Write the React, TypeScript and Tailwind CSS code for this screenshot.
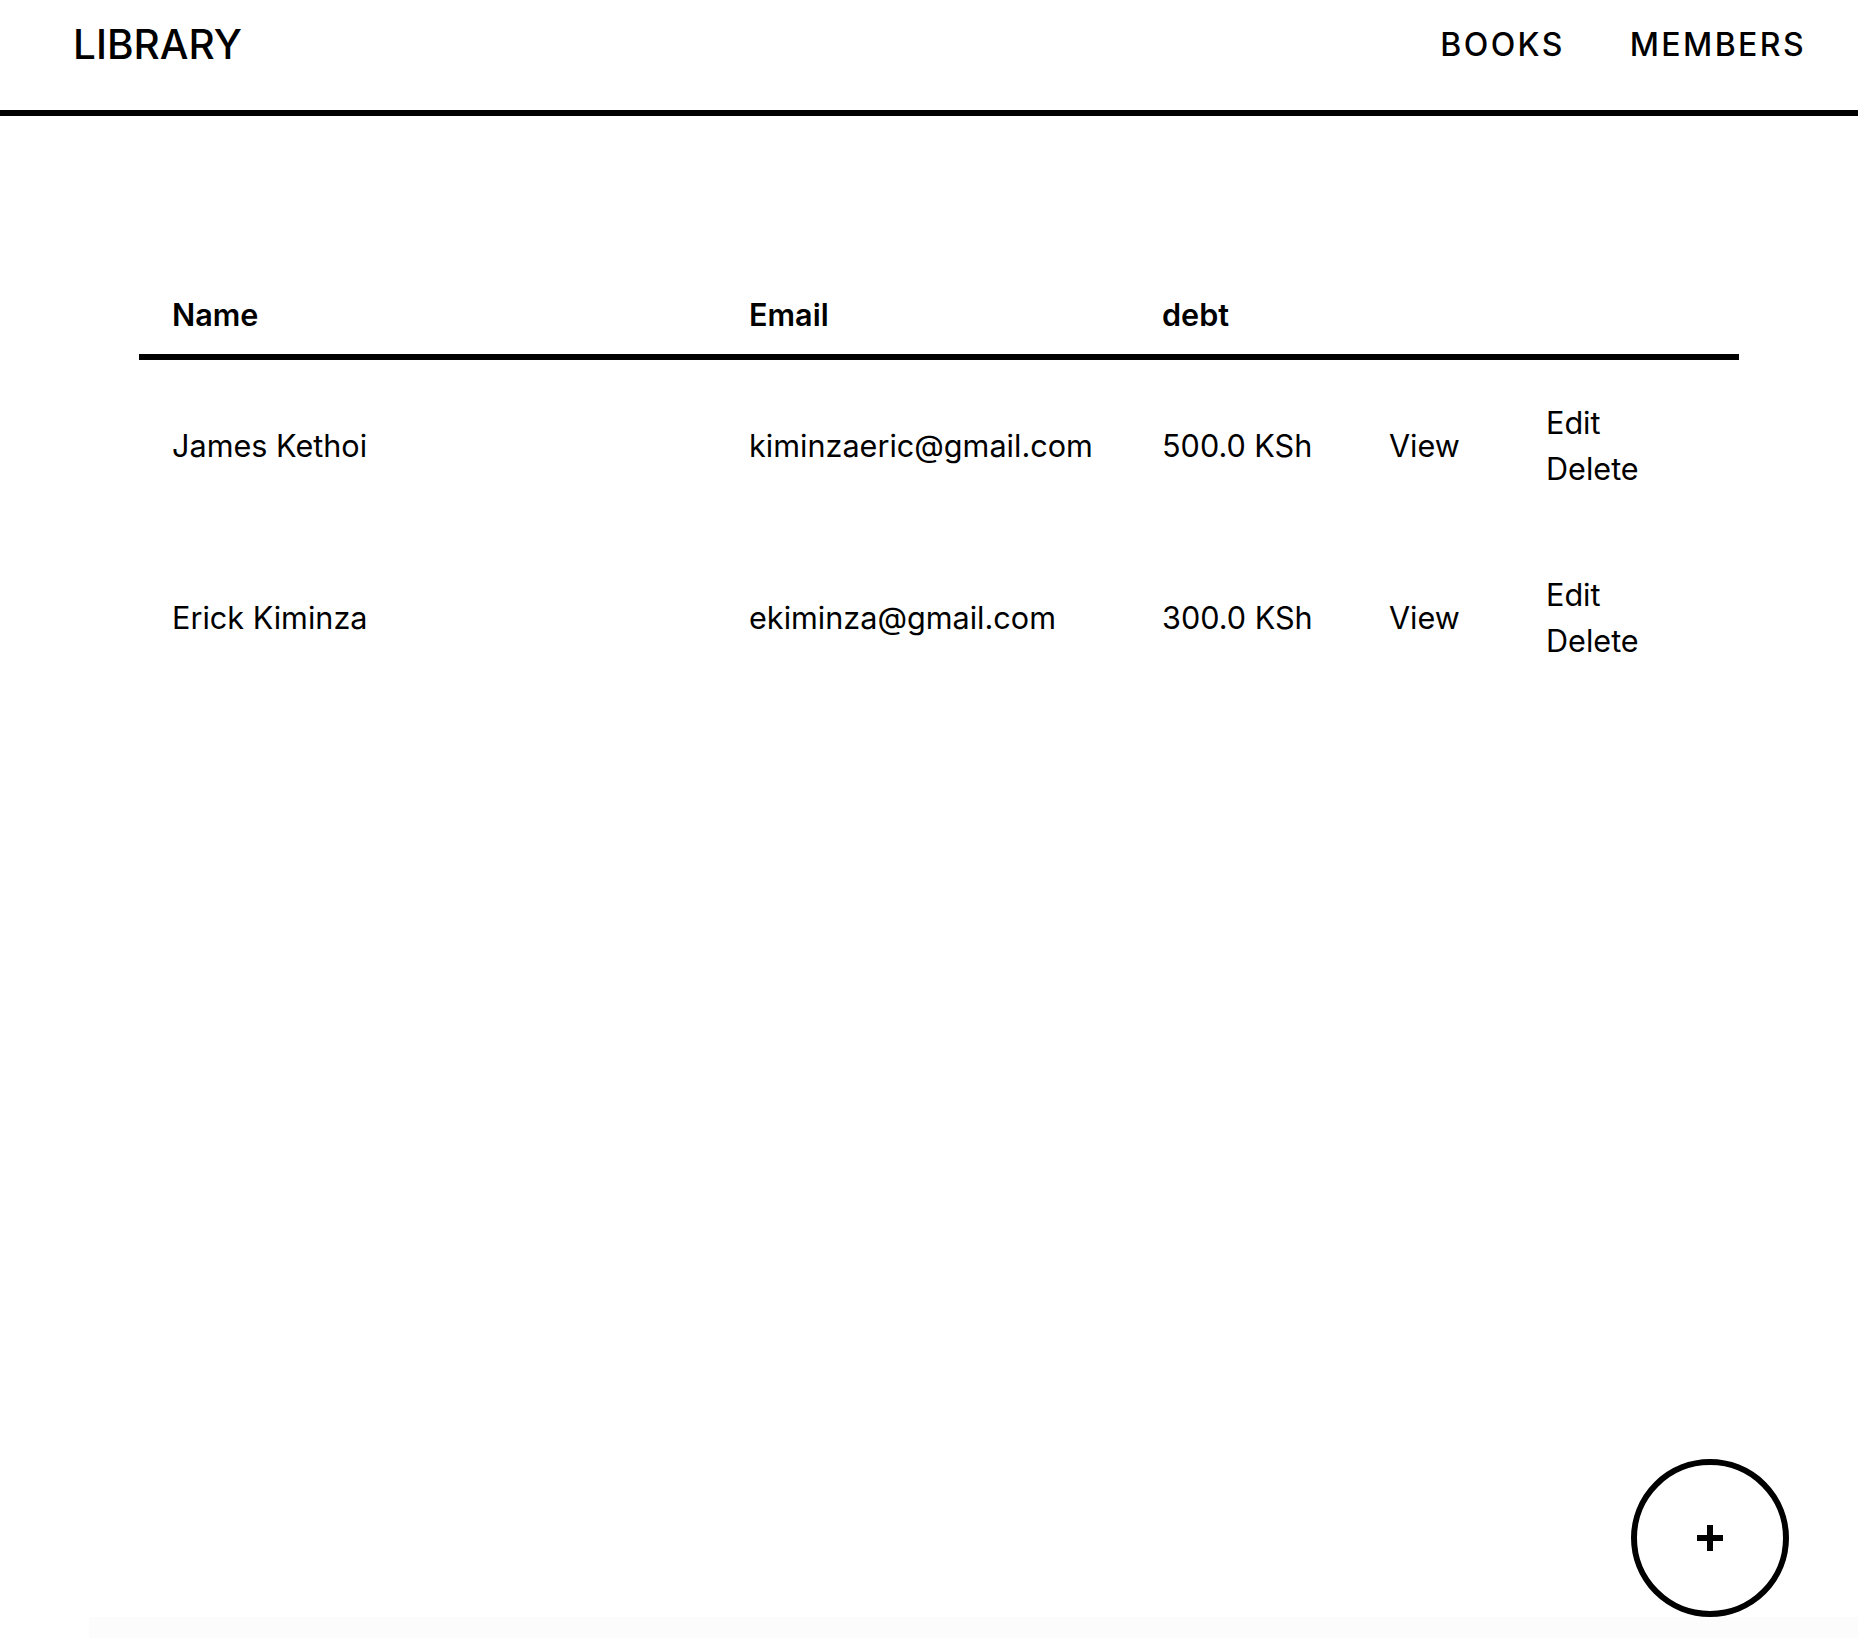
import React from "react";

const rows = [
  { name: "James Kethoi", email: "kiminzaeric@gmail.com", debt: "500.0 KSh" },
  { name: "Erick Kiminza", email: "ekiminza@gmail.com", debt: "300.0 KSh" },
];

const grid = "grid grid-cols-[577px_413px_227px_157px_226px]";

export default function App() {
  return (
    <div
      className="min-h-[1638px] bg-white text-black flex flex-col"
      style={{ fontFamily: "Inter, 'Noto Sans', sans-serif" }}
    >
      <header className="h-[116px] border-b-[6px] border-black flex items-center justify-between pl-[73px] pr-[52px] pb-[20px]">
        <div className="text-[40.5px] font-medium leading-none">LIBRARY</div>
        <nav className="flex gap-[65px] text-[32px] font-medium tracking-[2.4px] leading-none">
          <a>BOOKS</a>
          <a>MEMBERS</a>
        </nav>
      </header>

      <main className="flex-1 pt-[176px]">
        <div className="ml-[139px] w-[1600px] text-[30.6px] leading-[46px]">
          <div className={`${grid} border-b-[6px] border-black pb-[16px] font-semibold`}>
            <div className="pl-[33px]">Name</div>
            <div className="pl-[33px]">Email</div>
            <div className="pl-[33px]">debt</div>
            <div />
            <div />
          </div>
          {rows.map((r) => (
            <div key={r.email} className={`${grid} items-center py-[40px]`}>
              <div className="pl-[33px]">{r.name}</div>
              <div className="pl-[33px]">{r.email}</div>
              <div className="pl-[33px]">{r.debt}</div>
              <div className="pl-[33px]">View</div>
              <div className="pl-[33px] flex flex-col">
                <span>Edit</span>
                <span>Delete</span>
              </div>
            </div>
          ))}
        </div>
      </main>

      <div className="h-[21px] bg-[#fcfcfc] ml-[89px]" />

      <button className="fixed bottom-[21px] right-[69px] w-[158px] h-[158px] rounded-full border-[6px] border-black bg-white flex items-center justify-center">
        <svg width="26" height="26" viewBox="0 0 26 26">
          <path d="M13 0V26M0 13H26" stroke="black" strokeWidth="6" />
        </svg>
      </button>
    </div>
  );
}
